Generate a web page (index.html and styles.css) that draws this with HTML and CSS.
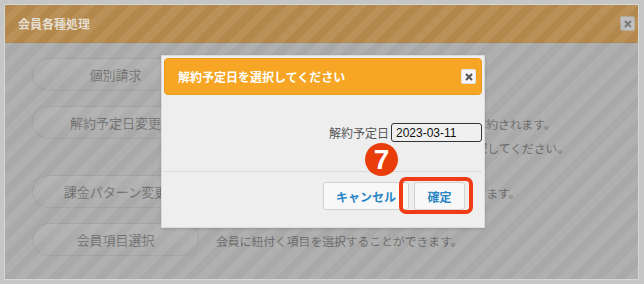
FILE: index.html
```html
<!DOCTYPE html>
<html lang="ja">
<head>
  <meta charset="UTF-8" />
  <title>会員各種処理</title>
  <link rel="stylesheet" href="styles.css">
</head>
<body>
  <div class="marco">
    <div class="panel">
      <div class="panel-cabecera">
        <span class="panel-titulo">会員各種処理</span>
        <span class="cerrar cerrar-gris">
          <svg width="8" height="8" viewBox="0 0 8 8"><path d="M1 1 L7 7 M7 1 L1 7" stroke="#7a7a7a" stroke-width="2"/></svg>
        </span>
      </div>
      <div class="panel-cuerpo">
        <div class="fila">
          <div class="boton-pill">個別請求</div>
        </div>
        <div class="fila">
          <div class="boton-pill">解約予定日変更</div>
          <div class="desc">解約予定日を変更します。変更後の解約予定日に解約されます。<br>解約予定日を変更する場合には、新しい日付を選択してください。</div>
        </div>
        <div class="fila">
          <div class="boton-pill">課金パターン変更</div>
          <div class="desc">課金パターンを別のパターンに変更することができます。</div>
        </div>
        <div class="fila">
          <div class="boton-pill">会員項目選択</div>
          <div class="desc">会員に紐付く項目を選択することができます。</div>
        </div>
      </div>
      <div class="velo"></div>
    </div>

    <div class="modal">
      <div class="modal-cabecera">
        <span class="modal-titulo">解約予定日を選択してください</span>
        <span class="cerrar cerrar-blanco">
          <svg width="8" height="8" viewBox="0 0 8 8"><path d="M1 1 L7 7 M7 1 L1 7" stroke="#555" stroke-width="2"/></svg>
        </span>
      </div>
      <div class="modal-cuerpo">
        <label class="etiqueta" for="fecha">解約予定日</label>
        <input id="fecha" class="campo" type="text" value="2023-03-11" />
      </div>
      <div class="modal-pie">
        <button class="boton-modal">キャンセル</button>
        <button class="boton-modal">確定</button>
      </div>
    </div>

    <div class="marca-num">7</div>
    <div class="marca-caja"></div>
  </div>
</body>
</html>
```

FILE: styles.css
```css
html, body {
  margin: 0;
  padding: 0;
  background: #c6c6c6;
  font-family: "Noto Sans CJK JP", "Liberation Sans", sans-serif;
}

.marco {
  position: relative;
  width: 644px;
  height: 284px;
  padding: 4px 5px 4px 4px;
  box-sizing: border-box;
}

.panel {
  position: relative;
  height: 100%;
  border: 1px solid #d6d6d6;
  background: #a9a9a9;
  box-sizing: border-box;
  overflow: hidden;
}

.panel-cabecera {
  height: 37px;
  background: #b4884b;
  border-bottom: 1px solid #a98048;
  display: flex;
  align-items: center;
  justify-content: space-between;
  padding: 0 3px 0 13px;
}

.panel-titulo {
  font-size: 12px;
  font-weight: bold;
  color: #e4dccf;
}

.cerrar {
  width: 15px;
  height: 15px;
  border-radius: 2px;
  display: flex;
  align-items: center;
  justify-content: center;
}

.cerrar-gris {
  background: #bdbdbd;
  border: 1px solid #b0a58f;
  box-sizing: border-box;
}

.cerrar-blanco {
  background: #f6f6f6;
  border: 1px solid #e2e2e2;
  box-sizing: border-box;
}

.panel-cuerpo {
  padding: 15px 0 0 27px;
  display: flex;
  flex-direction: column;
  gap: 15px;
}

.fila {
  display: flex;
  align-items: flex-start;
  gap: 17px;
}

.boton-pill {
  flex: none;
  width: 167px;
  height: 33px;
  box-sizing: border-box;
  border: 1px solid #9e9e9e;
  border-radius: 17px;
  background: linear-gradient(#afafaf, #a8a8a8);
  color: #717171;
  font-size: 13px;
  display: flex;
  align-items: center;
  justify-content: center;
}

.desc {
  padding-top: 6px;
  font-size: 11.8px;
  line-height: 24px;
  color: #686868;
  white-space: nowrap;
}

.velo {
  position: absolute;
  inset: 0;
  background: repeating-linear-gradient(135deg, rgba(255,255,255,0) 0 8px, rgba(255,255,255,0.08) 8px 16px);
}

.modal {
  position: absolute;
  left: 161px;
  top: 55px;
  width: 324px;
  height: 173px;
  box-sizing: border-box;
  background: #eeeeee;
  border: 1px solid #dcdcdc;
  padding: 2px;
  box-shadow: 0 1px 3px rgba(0, 0, 0, 0.15);
  display: flex;
  flex-direction: column;
}

.modal-cabecera {
  height: 37px;
  box-sizing: border-box;
  background: #f6a624;
  border: 1px solid #eb9b1e;
  border-radius: 4px;
  display: flex;
  align-items: center;
  justify-content: space-between;
  padding: 0 5px 0 13px;
}

.modal-titulo {
  font-size: 12px;
  font-weight: bold;
  color: #ffffff;
}

.modal-cuerpo {
  height: 77px;
  box-sizing: border-box;
  padding-top: 28px;
  border-bottom: 1px solid #dadada;
  display: flex;
  justify-content: flex-end;
  align-items: flex-start;
  gap: 2px;
}

.etiqueta {
  font-size: 12px;
  line-height: 19px;
  color: #555;
}

.campo {
  width: 91px;
  height: 19px;
  box-sizing: border-box;
  margin: 0;
  padding: 0 4px;
  border: 1px solid #333;
  border-radius: 3px;
  background: #f0f0f0;
  font-family: "Liberation Sans", Arial, sans-serif;
  font-size: 12px;
  color: #111;
}

.modal-pie {
  display: flex;
  justify-content: flex-end;
  gap: 5px;
  padding: 10px 17px 0 0;
}

.boton-modal {
  height: 28px;
  padding: 0 12px;
  border: 1px solid #d2d2d2;
  border-radius: 3px;
  background: #f8f8f8;
  color: #2a86c4;
  font-family: "Noto Sans CJK JP", sans-serif;
  font-size: 12px;
  font-weight: bold;
}

.boton-modal:last-child {
  width: 51px;
  padding: 0;
}

.marca-num {
  position: absolute;
  left: 365px;
  top: 143px;
  width: 33px;
  height: 33px;
  border-radius: 50%;
  background: #ea3d0c;
  color: #fff;
  font-family: "Liberation Sans", sans-serif;
  font-size: 28px;
  font-weight: bold;
  line-height: 34px;
  text-align: center;
}

.marca-caja {
  position: absolute;
  left: 399px;
  top: 177px;
  width: 74px;
  height: 37px;
  box-sizing: border-box;
  border: 4px solid #ef3b16;
  border-radius: 7px;
}
```
